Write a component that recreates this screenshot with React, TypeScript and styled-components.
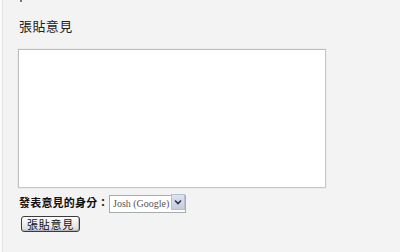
import * as React from 'react';
import styled, { createGlobalStyle } from 'styled-components';

const GlobalStyle = createGlobalStyle`
html, body {
margin: 0;
padding: 0;
background: #f3f3f3;
}
`

const Page = styled.div`
width: 400px;
height: 252px;
box-sizing: border-box;
background: #f3f3f3;
border-left: 2px solid #fafafa;
position: relative;
font-family: "Liberation Serif", "Noto Sans CJK TC", serif;
color: #222;
`

const Edge = styled.div`
position: absolute;
left: 0;
top: 0;
bottom: 0;
width: 1px;
background: #e4e4e4;
`

const Tick = styled.div`
position: absolute;
left: 18px;
top: 0;
width: 2px;
height: 2px;
background: #777;
`

const Form = styled.form`
display: flex;
flex-direction: column;
align-items: flex-start;
padding: 18px 0 0 16px;
margin: 0;
`

const Title = styled.h3`
margin: 0 0 16px 1px;
font-family: "Noto Sans CJK TC", sans-serif;
font-weight: normal;
font-size: 13px;
line-height: 15px;
letter-spacing: 0.4px;
color: #222;
`

const Comment = styled.textarea`
width: 308px;
height: 139px;
box-sizing: border-box;
margin: 0;
resize: none;
background: #fff;
border: 1px solid #c6c6c6;
border-top-color: #bdbdbd;
border-left-color: #bdbdbd;
box-shadow: 0 0 0 1px #ececec;
outline: none;
`

const IdentityRow = styled.div`
display: flex;
align-items: center;
margin-top: 5px;
margin-left: 1px;
`

const Label = styled.label`
flex: 0 0 90px;
white-space: nowrap;
font-family: "Noto Sans CJK TC", sans-serif;
font-weight: bold;
font-size: 11px;
line-height: 14px;
letter-spacing: 0.2px;
color: #111;
`

const SelectWrap = styled.div`
position: relative;
width: 77px;
height: 18px;
`

const Select = styled.select`
appearance: none;
width: 100%;
height: 100%;
box-sizing: border-box;
margin: 0;
padding: 0 0 0 3px;
border: 1px solid #a5acb2;
background: #fff;
font-family: "Liberation Serif", serif;
font-size: 10px;
color: #555;
outline: none;
`

const Arrow = styled.div`
position: absolute;
right: 1px;
top: 1px;
width: 14px;
height: 16px;
box-sizing: border-box;
display: flex;
align-items: center;
justify-content: center;
background: linear-gradient(#dfe3ef, #c7cbdc);
border: 1px solid #b9bfd2;
pointer-events: none;
`

const Submit = styled.button`
margin: 5px 0 0 3px;
width: 59px;
height: 16px;
box-sizing: border-box;
padding: 0;
display: flex;
align-items: center;
justify-content: center;
border: 1px solid #3c3c3c;
border-radius: 3px;
background: linear-gradient(#fdfdfd, #e6e6e6 70%, #d2d2d2);
box-shadow: inset -1px -1px 0 #b8b8b8;
font-family: "Noto Sans CJK TC", sans-serif;
font-size: 11px;
line-height: 13px;
letter-spacing: 0.8px;
color: #111;
`

export default function App() {
    return <>
        <GlobalStyle />
        <Page>
            <Edge />
            <Tick />
            <Form onSubmit={e => e.preventDefault()}>
                <Title>張貼意見</Title>
                <Comment />
                <IdentityRow>
                    <Label>發表意見的身分：</Label>
                    <SelectWrap>
                        <Select defaultValue="josh">
                            <option value="josh">Josh (Google)</option>
                        </Select>
                        <Arrow>
                            <svg width="8" height="6" viewBox="0 0 8 6">
                                <path d="M1 1.5 L4 4.5 L7 1.5" fill="none" stroke="#2c3550" strokeWidth="1.6" />
                            </svg>
                        </Arrow>
                    </SelectWrap>
                </IdentityRow>
                <Submit type="submit">張貼意見</Submit>
            </Form>
        </Page>
    </>
}
